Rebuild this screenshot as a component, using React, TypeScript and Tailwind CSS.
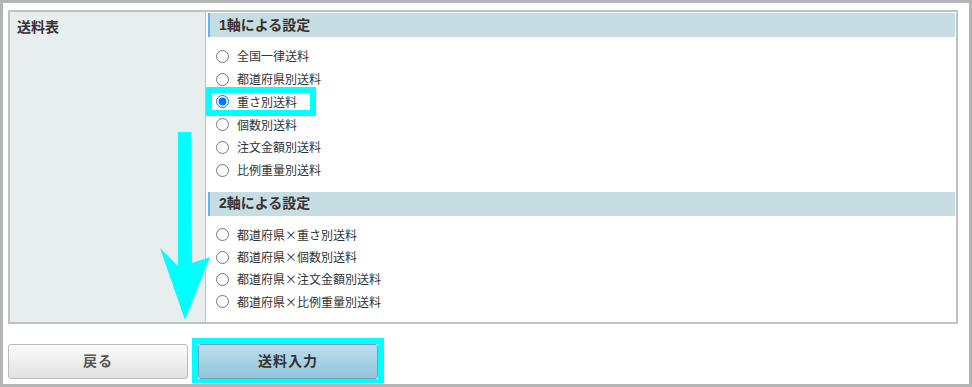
import React from 'react';

const oneAxis = ['全国一律送料', '都道府県別送料', '重さ別送料', '個数別送料', '注文金額別送料', '比例重量別送料'];
const twoAxis = ['都道府県×重さ別送料', '都道府県×個数別送料', '都道府県×注文金額別送料', '都道府県×比例重量別送料'];

const SectionBar = ({ title }: { title: string }) => (
  <div className="h-[24px] flex items-center border-l-2 border-[#62b5ee] bg-[#c6dde3] pl-[9px] text-[14px] font-bold text-[#3a3030]">
    {title}
  </div>
);

const RadioRow = ({ label, checked, highlight, h }: { label: string; checked?: boolean; highlight?: boolean; h: string }) => (
  <li className={`relative flex items-center ${h}`}>
    <input type="radio" name="shipping" defaultChecked={checked} className="m-0 ml-[8px] w-[13px] h-[13px]" />
    <span className="ml-[8px] text-[12px] text-[#333] font-['Noto_Sans_CJK_JP',sans-serif]">{label}</span>
    {highlight && (
      <div className="absolute -left-[2px] -top-[3.5px] w-[110px] h-[29px] border-[6px] border-[#00ffff] pointer-events-none"></div>
    )}
  </li>
);

export default function App() {
  return (
    <div
      className="relative w-[972px] h-[387px] border-[3px] border-[#b4b4b4] bg-white pl-[5px] pt-[7px] overflow-hidden"
      style={{ fontFamily: '"Liberation Sans", "Noto Sans CJK JP", sans-serif' }}
    >
      {/* TABLE */}
      <div className="flex w-[950px] border-2 border-[#bdc2c2]">
        <div className="w-[196px] shrink-0 bg-[#e8eded] border-r border-[#bdc2c2] pl-[7px] pt-[5px] text-[14px] leading-[20px] font-bold text-[#3a3030]">
          送料表
        </div>
        <div className="flex-1 pl-[2px] pr-[1px] pt-[1px]">
          <SectionBar title="1軸による設定" />
          <ul className="mt-[8px] mb-[10px]">
            {oneAxis.map((l, i) => (
              <RadioRow key={l} label={l} checked={i === 2} highlight={i === 2} h="h-[22.75px]" />
            ))}
          </ul>
          <SectionBar title="2軸による設定" />
          <ul className="mt-[8px] mb-[9px]">
            {twoAxis.map(l => (
              <RadioRow key={l} label={l} h="h-[22.4px]" />
            ))}
          </ul>
        </div>
      </div>

      {/* BUTTONS */}
      <div className="mt-[20px] flex gap-[10px]">
        <button className="w-[180px] h-[35px] rounded-[3px] border border-[#bbbbbb] bg-gradient-to-b from-[#fbfbfb] to-[#e2e2e2] text-[14px] tracking-[1px] font-bold text-[#555]">
          戻る
        </button>
        <div className="relative">
          <button className="w-[180px] h-[35px] rounded-[3px] border border-[#6fa3b8] bg-gradient-to-b from-[#bddded] to-[#90c5dc] text-[14px] tracking-[1px] font-bold text-[#333]">
            送料入力
          </button>
          <div className="absolute -left-[6px] -top-[6px] w-[192px] h-[45px] border-x-[6px] border-t-[6px] border-b-[4px] border-[#00ffff] pointer-events-none"></div>
        </div>
      </div>

      {/* Annotation arrow */}
      <svg className="absolute -left-[3px] -top-[3px] pointer-events-none" width="972" height="387" viewBox="0 0 972 387">
        <polygon points="178,132 191,132 192,263 210,257 185,320 160,248 178,266" fill="#00ffff" />
      </svg>
    </div>
  );
}
